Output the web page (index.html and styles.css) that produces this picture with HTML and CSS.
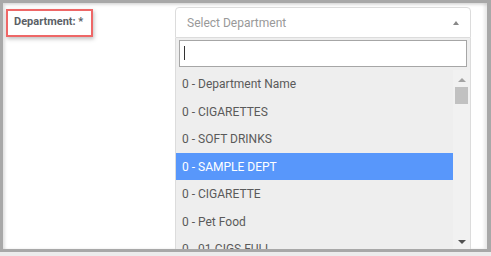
FILE: index.html
```html
<!DOCTYPE html>
<html lang="en">
<head>
<meta charset="utf-8">
<title>Department</title>
<link rel="stylesheet" href="styles.css">
</head>
<body>
<div class="frame">
  <div class="panel">
    <div class="field">
      <div class="label-col">
        <label class="label">Department: *</label>
      </div>
      <div class="select">
        <div class="select-box">
          <span class="placeholder">Select Department</span>
          <span class="caret-up"></span>
        </div>
        <div class="drop">
          <div class="search"><input type="text" class="search-input" value=""><span class="cursor"></span></div>
          <div class="results">
            <ul class="options">
              <li>0 - Department Name</li>
              <li>0 - CIGARETTES</li>
              <li>0 - SOFT DRINKS</li>
              <li class="active">0 - SAMPLE DEPT</li>
              <li>0 - CIGARETTE</li>
              <li>0 - Pet Food</li>
              <li>0 - 01-CIGS FULL</li>
            </ul>
            <div class="scrollbar">
              <span class="sb-up"></span>
              <span class="sb-thumb"></span>
              <span class="sb-down"></span>
            </div>
          </div>
        </div>
      </div>
    </div>
  </div>
</div>
</body>
</html>
```

FILE: styles.css
```css
html, body {
  margin: 0;
  padding: 0;
}
body {
  font-family: Roboto, "Liberation Sans", Arial, sans-serif;
  background: #ececec;
}
.frame {
  width: 491px;
  height: 256px;
  overflow: hidden;
  background: #ececec;
}
.panel {
  box-sizing: border-box;
  width: 491px;
  height: 252px;
  border-top: 3px solid #a8a8a8;
  border-left: 3px solid #a8a8a8;
  border-right: 4px solid #a8a8a8;
  border-bottom: 3px solid #a8a8a8;
  background: #fff;
  box-shadow: inset 2px 2px 3px rgba(0,0,0,0.12), inset -3px 0 3px rgba(0,0,0,0.08);
  overflow: hidden;
}
.field {
  display: flex;
  height: 100%;
}
.label-col {
  width: 172px;
  padding: 6px 0 0 3px;
  box-sizing: border-box;
}
.label {
  display: inline-block;
  border: 2px solid #ee6767;
  padding: 4px 8px 7px 6px;
  font-size: 11px;
  font-weight: bold;
  color: #5b5f66;
  box-shadow: 1px 2px 4px rgba(0,0,0,0.25);
}
.select {
  width: 296px;
  margin-top: 4px;
  display: flex;
  flex-direction: column;
  min-height: 0;
}
.select-box {
  box-sizing: border-box;
  flex-shrink: 0;
  height: 31px;
  border: 1px solid #dcdcdc;
  border-radius: 4px 4px 0 0;
  display: flex;
  align-items: center;
  justify-content: space-between;
  padding: 0 11px 0 11px;
  background: #fff;
}
.placeholder {
  font-size: 12px;
  color: #999;
}
.caret-up {
  width: 0;
  height: 0;
  border-left: 3px solid transparent;
  border-right: 3px solid transparent;
  border-bottom: 4px solid #888;
}
.drop {
  flex: 1;
  min-height: 0;
  border-left: 1px solid #dcdcdc;
  border-right: 1px solid #dcdcdc;
  background: #eee;
  display: flex;
  flex-direction: column;
}
.search {
  position: relative;
  flex-shrink: 0;
  padding: 2px 3px 3px 3px;
}
.search-input {
  box-sizing: border-box;
  width: 100%;
  height: 27px;
  margin: 0;
  border: 1px solid #a6a6a6;
  background: #fff;
  outline: none;
}
.cursor {
  position: absolute;
  left: 8px;
  top: 8px;
  width: 1px;
  height: 14px;
  background: #333;
}
.results {
  flex: 1;
  min-height: 0;
  display: flex;
  overflow: hidden;
}
.options {
  list-style: none;
  margin: 0;
  padding: 0;
  flex: 1;
}
.options li {
  padding: 7px 6px 5px 6px;
  line-height: 15.5px;
  font-size: 12px;
  color: #5a5a5a;
}
.options li.active {
  background: #5897fb;
  color: #fff;
}
.scrollbar {
  width: 17px;
  background: #f1f1f1;
  position: relative;
}
.sb-up {
  position: absolute;
  left: 5px;
  top: 8px;
  border-left: 4px solid transparent;
  border-right: 4px solid transparent;
  border-bottom: 4px solid #a3a3a3;
}
.sb-thumb {
  position: absolute;
  left: 2px;
  top: 17px;
  width: 13px;
  height: 17px;
  background: #c1c1c1;
}
.sb-down {
  position: absolute;
  left: 5px;
  top: 170px;
  border-left: 4px solid transparent;
  border-right: 4px solid transparent;
  border-top: 4px solid #505050;
}
```
